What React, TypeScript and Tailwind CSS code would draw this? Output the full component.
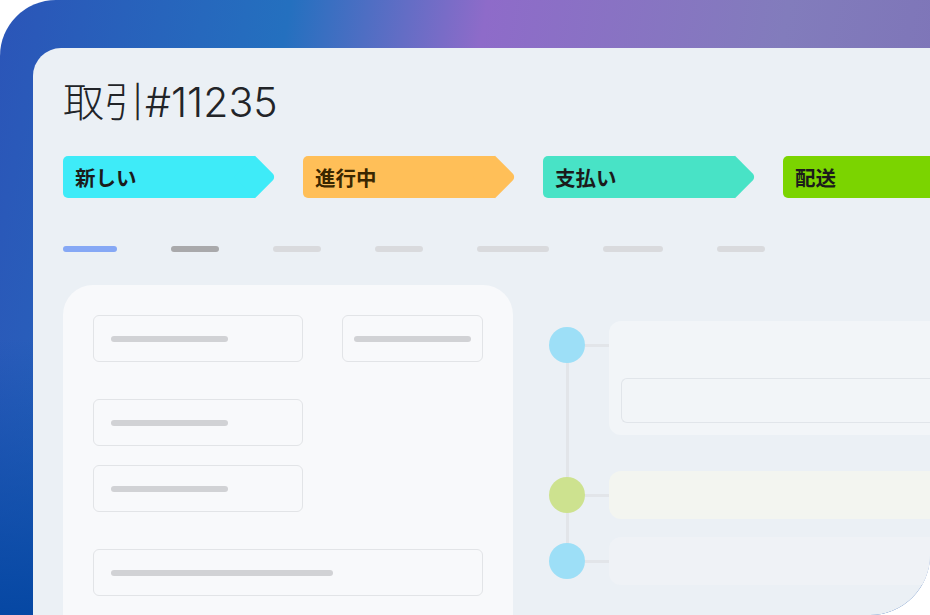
const tabs = [
  { label: '新しい', bg: 'bg-[#3eebf8]', text: 'text-[#1b1b1b]' },
  { label: '進行中', bg: 'bg-[#ffbf58]', text: 'text-[#3a2700]' },
  { label: '支払い', bg: 'bg-[#48e3c6]', text: 'text-[#1b1b1b]' },
  { label: '配送', bg: 'bg-[#7bd400]', text: 'text-[#1b1b1b]' },
]

const bars = [
  { w: 'w-[54px]', bg: 'bg-[#86a8f5]' },
  { w: 'w-[48px]', bg: 'bg-[#a9a9ab]' },
  { w: 'w-[48px]', bg: 'bg-[#d9dadd]' },
  { w: 'w-[48px]', bg: 'bg-[#d9dadd]' },
  { w: 'w-[72px]', bg: 'bg-[#d9dadd]' },
  { w: 'w-[60px]', bg: 'bg-[#d9dadd]' },
  { w: 'w-[48px]', bg: 'bg-[#d9dadd]' },
]

function Tab({ label, bg, text }: { label: string; bg: string; text: string }) {
  return (
    <div className="relative shrink-0 w-[214px] h-[42px]">
      <div className={`relative flex items-center w-[192px] h-[42px] rounded-l-[5px] pl-[12px] ${bg}`}>
        <div className={`absolute right-[-15px] top-[6px] w-[30px] h-[30px] rotate-45 rounded-tr-[5px] ${bg}`} />
        <span className={`relative font-['Noto_Sans_CJK_JP',sans-serif] font-bold text-[20.5px] leading-none ${text}`}>
          {label}
        </span>
      </div>
    </div>
  )
}

function Field({ width, barWidth, pad = 'pl-[17px]' }: { width: string; barWidth: string; pad?: string }) {
  return (
    <div className={`flex items-center h-[47px] border border-[#e2e4e7] rounded-[6px] ${pad} ${width}`}>
      <div className={`h-[6px] rounded-full bg-[#d1d2d5] ${barWidth}`} />
    </div>
  )
}

function Dot({ color }: { color: string }) {
  return (
    <div className="flex items-center shrink-0 pt-[6px]">
      <div className={`relative z-10 w-[36px] h-[36px] rounded-full ${color}`} />
      <div className="w-[24px] h-[3px] bg-[#e2e5e9]" />
    </div>
  )
}

export default function App() {
  return (
    <div className="w-[930px] h-[615px] bg-white overflow-hidden">
      <div className="w-full h-full rounded-tl-[56px] rounded-br-[60px] overflow-hidden pt-[48px] pl-[33px] bg-[linear-gradient(180deg,rgba(6,68,160,0)_0%,rgba(6,68,160,0)_55%,rgba(4,70,162,0.95)_100%),linear-gradient(100deg,#2b55b8_0%,#2470bf_28%,#8e6bc9_47%,#827cbc_76%,#7c72b6_100%)]">
        <div className="h-full bg-[#ebf0f5] rounded-tl-[28px] pl-[30px] pt-[30px] flex flex-col">
          <h1 className="font-['Inter','Noto_Sans_CJK_JP',sans-serif] font-light text-[41px] leading-[48px] text-[#222428]">
            取引#11235
          </h1>

          <div className="flex gap-[26px] mt-[30px]">
            {tabs.map((t) => (
              <Tab key={t.label} {...t} />
            ))}
          </div>

          <div className="flex gap-[54px] mt-[48px]">
            {bars.map((b, i) => (
              <div key={i} className={`h-[6px] rounded-full ${b.w} ${b.bg}`} />
            ))}
          </div>

          <div className="flex gap-[36px] mt-[33px] flex-1">
            <div className="shrink-0 w-[450px] h-full bg-[#f8f9fb] rounded-t-[30px] p-[30px] flex flex-col">
              <div className="flex gap-[39px]">
                <Field width="w-[210px]" barWidth="w-[117px]" />
                <Field width="w-[141px]" barWidth="w-[117px]" pad="pl-[11px]" />
              </div>
              <div className="mt-[37px]">
                <Field width="w-[210px]" barWidth="w-[117px]" />
              </div>
              <div className="mt-[19px]">
                <Field width="w-[210px]" barWidth="w-[117px]" />
              </div>
              <div className="mt-[37px]">
                <Field width="w-full" barWidth="w-[222px]" />
              </div>
            </div>

            <div className="relative flex-1 flex flex-col pt-[36px] mr-[-40px]">
              <div className="absolute left-[17px] top-[60px] w-[3px] h-[216px] bg-[#e2e5e9]" />
              <div className="flex items-start">
                <Dot color="bg-[#9ddff7]" />
                <div className="flex-1 h-[114px] bg-[#f2f5f8] rounded-[12px] pt-[57px] pl-[12px]">
                  <div className="h-[45px] border border-[#e1e5ea] rounded-l-[6px] border-r-0" />
                </div>
              </div>
              <div className="flex items-start mt-[36px]">
                <Dot color="bg-[#cde28f]" />
                <div className="flex-1 h-[48px] bg-[#f3f5f0] rounded-[12px]" />
              </div>
              <div className="flex items-start mt-[18px]">
                <Dot color="bg-[#9ddff7]" />
                <div className="flex-1 h-[48px] bg-[#eff2f6] rounded-[12px]" />
              </div>
            </div>
          </div>
        </div>
      </div>
    </div>
  )
}
